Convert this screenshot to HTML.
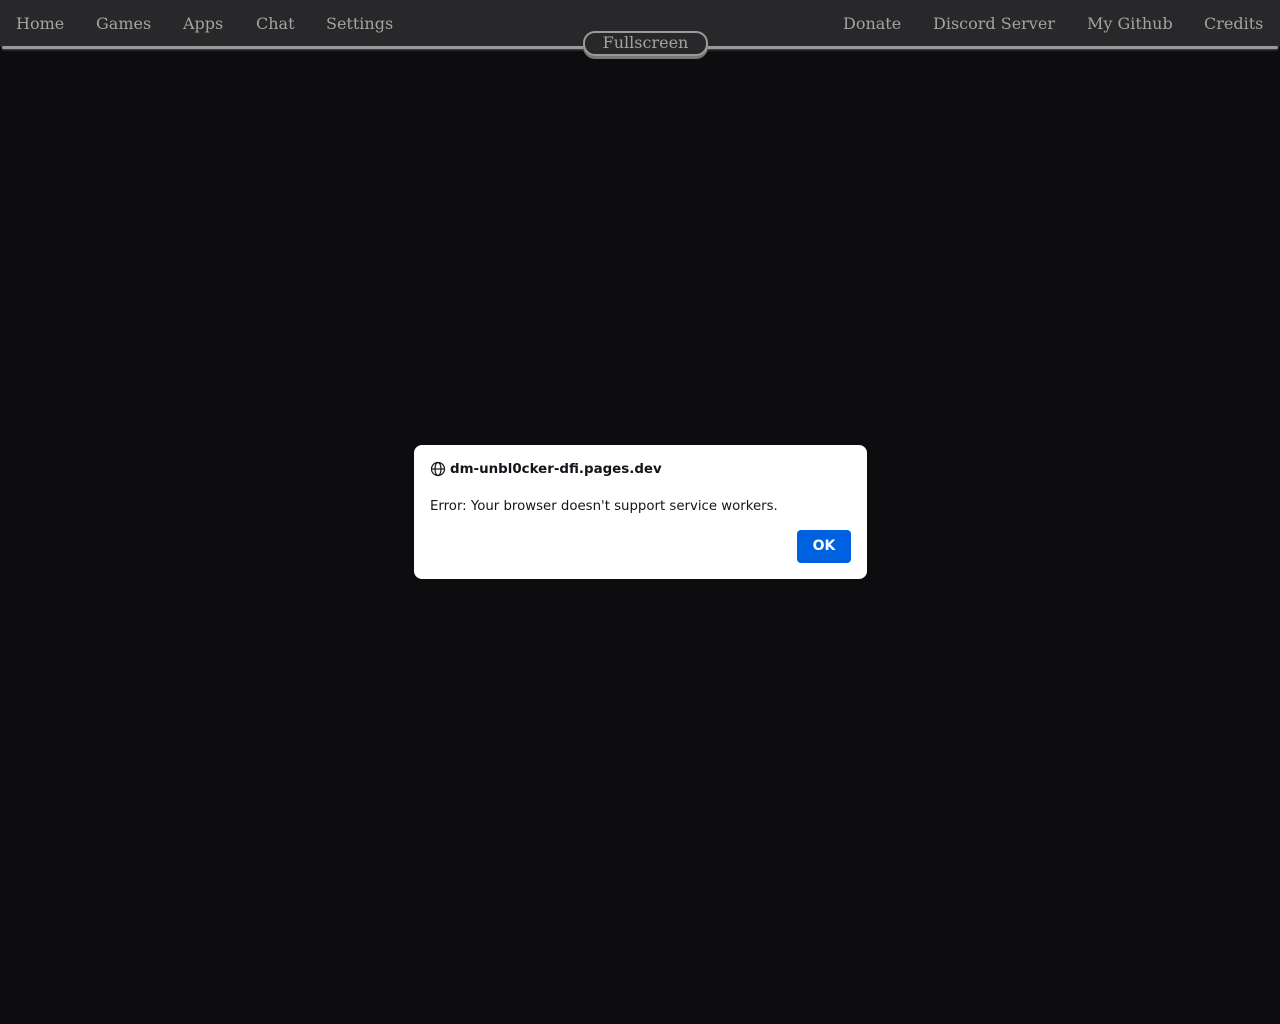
<!DOCTYPE html>
<html><head><style>
body{margin:0;width:1280px;height:1024px;background:#0d0d0f;overflow:hidden;position:relative;font-family:"DejaVu Serif",serif}
.nav{position:absolute;left:0;top:0;width:1280px;height:47px;background:#28282a}
.line{position:absolute;left:2px;top:46px;width:1276px;height:3px;background:#9a9a9a;border-radius:2px;box-shadow:0 1px 2px #555}
.nav a{position:absolute;top:14px;font-size:16px;color:#a3a3a3;text-decoration:none;white-space:nowrap}
.fs{position:absolute;left:583px;top:31px;width:121px;height:21px;border:2px solid #9a9a9a;border-radius:12px;background:#28282a;color:#a3a3a3;font-size:16px;text-align:center;line-height:19px;box-shadow:0 3px 0 #777}
.dlg{position:absolute;left:414px;top:445px;width:453px;height:134px;background:#fff;border-radius:8px;font-family:"DejaVu Sans",sans-serif;color:#15141a}
.t{position:absolute;left:16px;top:16px;font-size:13.4px;font-weight:bold;display:flex;align-items:center;gap:4px}
.m{position:absolute;left:16px;top:54px;font-size:13.3px}
.ok{position:absolute;left:383px;top:85px;width:54px;height:33px;background:#0061e0;border-radius:4px;color:#fff;font-weight:bold;font-size:14px;text-align:center;line-height:33px}
</style></head><body>
<div class="nav">
<a style="left:16px">Home</a><a style="left:96px">Games</a><a style="left:183px">Apps</a><a style="left:256px">Chat</a><a style="left:326px">Settings</a>
<a style="left:843px">Donate</a><a style="left:933px">Discord Server</a><a style="left:1087px">My Github</a><a style="left:1204px">Credits</a>
</div>
<div class="line"></div>
<div class="fs">Fullscreen</div>
<div class="dlg">
<div class="t"><svg width="16" height="16" viewBox="0 0 16 16" fill="none" stroke="#15141a" stroke-width="1.2"><circle cx="8" cy="8" r="6.5"/><ellipse cx="8" cy="8" rx="3" ry="6.5"/><line x1="1.5" y1="8" x2="14.5" y2="8"/></svg>dm-unbl0cker-dfi.pages.dev</div>
<div class="m">Error: Your browser doesn't support service workers.</div>
<div class="ok">OK</div>
</div>
</body></html>
